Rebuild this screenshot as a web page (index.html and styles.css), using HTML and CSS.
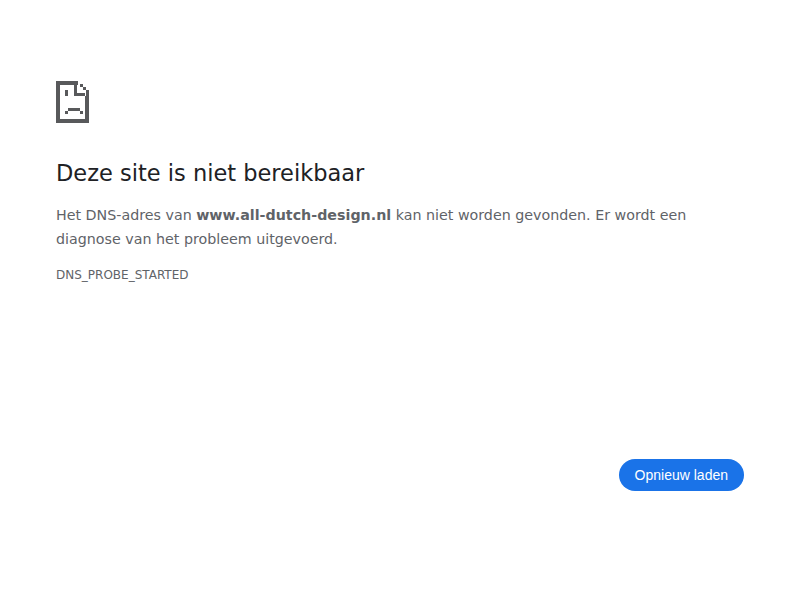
FILE: index.html
```html
<!DOCTYPE html>
<html lang="nl">
<head>
  <meta charset="UTF-8">
  <title>Deze site is niet bereikbaar</title>
  <link rel="stylesheet" href="styles.css">
</head>
<body>
  <div class="interstitial">
    <svg class="icon" width="33" height="42" viewBox="0 0 33 42" shape-rendering="crispEdges">
      <path fill="#58595b" d="M0 0H22V4H4V38H29V15H33V42H0ZM18 0H21V12H29V15H18ZM24 3H27V6H24ZM27 6H30V9H27ZM30 9H33V15H30ZM9 9H12V15H9ZM12 27H24V30H12ZM9 30H12V33H9ZM24 30H27V33H24Z"/>
    </svg>
    <h1 class="title">Deze site is niet bereikbaar</h1>
    <p class="desc">Het DNS-adres van <strong>www.all-dutch-design.nl</strong> kan niet worden gevonden. Er wordt een diagnose van het probleem uitgevoerd.</p>
    <div class="code">DNS_PROBE_STARTED</div>
    <div class="actions">
      <button class="reload">Opnieuw laden</button>
    </div>
  </div>
</body>
</html>
```

FILE: styles.css
```css
body {
  margin: 0;
  background: #fff;
  color: #5f6368;
  font-family: "DejaVu Sans", sans-serif;
  font-size: 14.25px;
}
.interstitial {
  padding: 81px 56px 0;
}
.icon {
  display: block;
}
.title {
  margin: 35px 0 0;
  color: #202124;
  font-size: 22.5px;
  font-weight: 400;
  line-height: 30px;
}
.desc {
  margin: 15px 0 0;
  font-size: 14.25px;
  line-height: 24px;
}
.code {
  margin-top: 15px;
  font-size: 12px;
  line-height: 18px;
}
.actions {
  display: flex;
  justify-content: flex-end;
  margin-top: 175px;
}
.reload {
  height: 32px;
  padding: 0 16px;
  border: none;
  border-radius: 16px;
  background: #1a73e8;
  color: #fff;
  font-family: "Liberation Sans", sans-serif;
  font-size: 14px;
}
```
